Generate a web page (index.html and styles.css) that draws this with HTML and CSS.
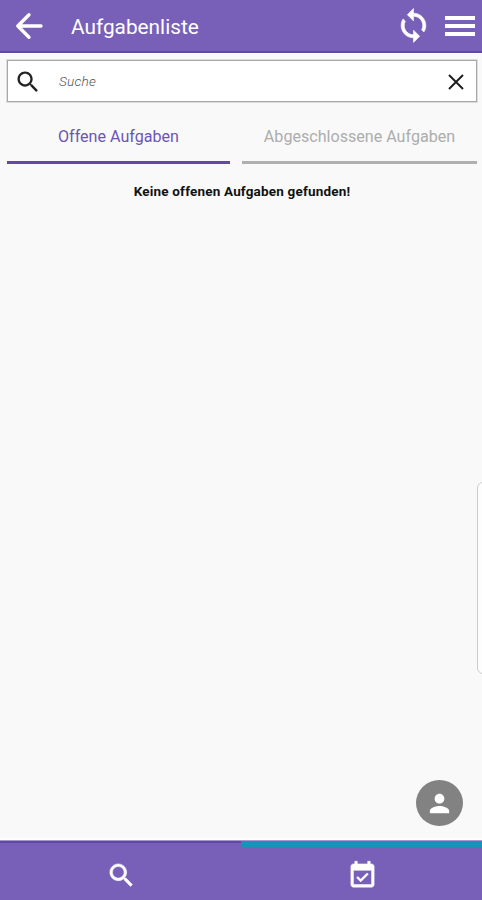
FILE: index.html
```html
<!DOCTYPE html>
<html lang="de">
<head>
<meta charset="utf-8">
<title>Aufgabenliste</title>
<link rel="stylesheet" href="styles.css">
</head>
<body>
<div class="app">
  <header class="topbar">
    <svg class="back" viewBox="0 0 28 28"><path d="M26 14H3M14 2.8L2.8 14L14 25.2"/></svg>
    <h1 class="title">Aufgabenliste</h1>
    <svg class="sync" viewBox="0 0 24 24"><path d="M12 4V1L8 5l4 4V6c3.31 0 6 2.69 6 6 0 1.01-.25 1.97-.7 2.8l1.46 1.46C19.54 15.03 20 13.57 20 12c0-4.42-3.58-8-8-8zm0 14c-3.31 0-6-2.69-6-6 0-1.01.25-1.97.7-2.8L5.24 7.74C4.46 8.97 4 10.43 4 12c0 4.42 3.58 8 8 8v3l4-4-4-4v3z"/></svg>
    <div class="menu"><span></span><span></span><span></span></div>
  </header>
  <main class="content">
    <div class="search">
      <svg class="search-icon" viewBox="0 0 24 24"><path d="M15.5 14h-.79l-.28-.27C15.41 12.59 16 11.11 16 9.5 16 5.91 13.09 3 9.5 3S3 5.91 3 9.5 5.91 16 9.5 16c1.61 0 3.09-.59 4.23-1.57l.27.28v.79l5 4.99L20.49 19l-4.99-5zm-6 0C7.01 14 5 11.99 5 9.5S7.01 5 9.5 5 14 7.01 14 9.5 11.99 14 9.5 14z"/></svg>
      <span class="placeholder">Suche</span>
      <svg class="clear" viewBox="0 0 16 16"><path d="M1 1L15 15M15 1L1 15"/></svg>
    </div>
    <nav class="tabs">
      <div class="tab active"><span class="open-label">Offene Aufgaben</span></div>
      <div class="tab"><span class="closed-label">Abgeschlossene Aufgaben</span></div>
    </nav>
    <p class="empty">Keine offenen Aufgaben gefunden!</p>
  </main>
  <footer class="bottombar">
    <div class="dock"><svg class="dock-icon" viewBox="0 0 24 24"><path d="M15.5 14h-.79l-.28-.27C15.41 12.59 16 11.11 16 9.5 16 5.91 13.09 3 9.5 3S3 5.91 3 9.5 5.91 16 9.5 16c1.61 0 3.09-.59 4.23-1.57l.27.28v.79l5 4.99L20.49 19l-4.99-5zm-6 0C7.01 14 5 11.99 5 9.5S7.01 5 9.5 5 14 7.01 14 9.5 11.99 14 9.5 14z"/></svg></div>
    <div class="dock current"><svg class="dock-icon" viewBox="0 0 24 24"><path d="M16.53 11.06L15.47 10l-4.88 4.88-2.12-2.12-1.06 1.06L10.59 17l5.94-5.94zM19 3h-1V1h-2v2H8V1H6v2H5c-1.11 0-1.99.9-1.99 2L3 19c0 1.1.89 2 2 2h14c1.1 0 2-.9 2-2V5c0-1.1-.9-2-2-2zm0 16H5V8h14v11z"/></svg></div>
  </footer>
  <div class="edge-panel"></div>
  <div class="user"><svg viewBox="0 0 24 24"><path d="M12 12c2.21 0 4-1.79 4-4s-1.79-4-4-4-4 1.79-4 4 1.79 4 4 4zm0 2c-2.67 0-8 1.34-8 4v2h16v-2c0-2.66-5.33-4-8-4z"/></svg></div>
</div>
</body>
</html>
```
FILE: styles.css
```css
* { box-sizing: border-box; }
body { margin: 0; font-family: Roboto, sans-serif; }
svg { display: block; flex: none; }
.app {
  position: relative;
  display: flex;
  flex-direction: column;
  height: 900px;
  overflow: hidden;
  background: #f9f9f9;
}
.topbar {
  display: flex;
  align-items: center;
  height: 53px;
  padding: 0 7px 0 15px;
  background: #7860b9;
  border-bottom: 2px solid #6049a4;
  color: #fff;
}
.back { width: 28px; height: 28px; margin-top: 1px; fill: none; stroke: #fff; stroke-width: 3.4; stroke-linecap: round; stroke-linejoin: round; }
.title { flex: 1; margin: 3px 0 0 28px; font-size: 20.8px; font-weight: 400; line-height: 28px; }
.sync { width: 37px; height: 37px; fill: #fff; stroke: #fff; stroke-width: 0.4; }
.menu { display: flex; flex-direction: column; gap: 4px; width: 30px; margin-left: 13px; margin-top: 1px; }
.menu span { height: 4px; background: #fff; }
.content { flex: 1; padding: 7px 5px 0 7px; border-top: 1px solid #fff; border-bottom: 2px solid #fff; }
.search {
  display: flex;
  align-items: center;
  height: 42px;
  margin-top: -1px;
  padding: 0 12px 0 6px;
  border: 1px solid #a8a8a8;
  box-shadow: 0 0 0 1px #dedede;
  background: #fff;
}
.search-icon { width: 28px; height: 28px; margin-top: 1px; fill: #222; }
.placeholder { flex: 1; margin: 0 0 1px 17px; font-size: 13.6px; letter-spacing: 0.2px; font-style: italic; font-weight: 300; color: #555; }
.clear { width: 16px; height: 16px; margin-top: 1px; fill: none; stroke: #1c1c1c; stroke-width: 1.9; }
.tabs { display: grid; grid-template-columns: 223px 235px; column-gap: 12px; margin-top: 18px; }
.tab { height: 44px; padding-top: 6px; border-bottom: 3px solid #b0b0b0; color: #adadad; font-size: 16.1px; line-height: 22px; text-align: center; white-space: nowrap; }
.active { border-color: #6049a8; color: #6c55b5; }
.empty { margin: 17px 0 0; font-size: 13.5px; letter-spacing: 0.18px; font-weight: 700; line-height: 20px; text-align: center; color: #111; }
.bottombar { display: grid; grid-template-columns: 1fr 1fr; height: 60px; background: #7860b9; border-top: 1px solid #a697d0; }
.dock { display: flex; justify-content: center; align-items: center; padding: 8px 0 0 1px; border-top: 2px solid #6049a4; }
.current { padding-top: 4px; border-top: 6px solid #1795b8; }
.dock-icon { width: 31px; height: 31px; fill: #fff; stroke: #fff; stroke-width: 0.4; }
.edge-panel { position: absolute; left: 477px; top: 482px; width: 12px; height: 192px; border: 1px solid #ccc; border-radius: 6px; background: #fdfdfd; }
.user { position: absolute; left: 416px; top: 780px; display: flex; align-items: center; justify-content: center; width: 47px; height: 46px; border-radius: 50%; background: #828282; }
.user svg { width: 29px; height: 29px; fill: #fff; }
```
